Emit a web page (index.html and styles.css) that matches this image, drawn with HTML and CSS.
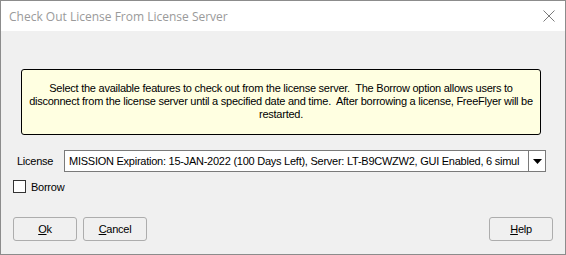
FILE: index.html
```html
<!DOCTYPE html>
<html>
<head>
<meta charset="utf-8">
<link rel="stylesheet" href="styles.css">
</head>
<body>
<div class="window">
  <div class="titlebar">
    <span class="title">Check Out License From License Server</span>
    <svg class="close" width="12" height="12" viewBox="0 0 12 12"><path d="M0.5 0.5 L11.5 11.5 M11.5 0.5 L0.5 11.5" stroke="#7a7a7a" stroke-width="1" fill="none"/></svg>
  </div>
  <div class="content">
    <div class="tip">Select the available features to check out from the license server.&nbsp; The Borrow option allows users to disconnect from the license server until a specified date and time.&nbsp; After borrowing a license, FreeFlyer will be restarted.</div>
    <div class="license-row">
      <span class="label">License</span>
      <div class="combo">
        <span class="combo-text">MISSION Expiration: 15-JAN-2022 (100 Days Left), Server: LT-B9CWZW2, GUI Enabled, 6 simul</span>
        <span class="combo-btn"><svg width="9" height="5" viewBox="0 0 9 5"><path d="M0 0 H9 L4.5 5 Z" fill="#000"/></svg></span>
      </div>
    </div>
    <div class="borrow-row">
      <span class="check"></span>
      <span>Borrow</span>
    </div>
    <div class="buttons">
      <button class="btn"><u>O</u>k</button>
      <button class="btn"><u>C</u>ancel</button>
      <span class="spacer"></span>
      <button class="btn"><u>H</u>elp</button>
    </div>
  </div>
</div>
</body>
</html>
```
FILE: styles.css
```css
* { box-sizing: border-box; }
html, body { margin: 0; padding: 0; background: #f0f0f0; }
body { font-family: "Liberation Sans", Arial, sans-serif; font-size: 11px; color: #000; letter-spacing: -0.25px; }
.window {
  width: 566px; height: 255px;
  border: 1px solid #8c8c8c;
  background: #f0f0f0;
  display: flex; flex-direction: column;
}
.titlebar {
  height: 30px; background: #fff;
  display: flex; align-items: center;
  padding: 0 10px 0 8px;
}
.title {
  font-family: "Open Sans", "Noto Sans", sans-serif;
  font-size: 12px; color: #9a9a9a;
  letter-spacing: 0;
  flex: 1;
}
.close { display: block; }
.content {
  flex: 1;
  padding: 38px 0 0 0;
  display: flex; flex-direction: column;
}
.tip {
  margin-left: 20px; width: 520px; height: 66px;
  background: #ffffe1;
  border: 1px solid #000;
  border-radius: 3px;
  text-align: center;
  line-height: 13px;
  padding: 12px 1px 0 1px;
}
.license-row {
  display: flex; align-items: center;
  margin-top: 15px;
  padding-left: 16px;
}
.label { width: 47px; }
.combo {
  width: 482px; height: 22px;
  background: #fff;
  border: 1px solid #7a7a7a;
  display: flex; align-items: center;
}
.combo-text { flex: 1; padding-left: 4px; white-space: nowrap; overflow: hidden; }
.combo-btn {
  width: 17px; height: 20px;
  border-left: 1px solid #7a7a7a;
  background: #fff;
  display: flex; align-items: center; justify-content: center;
}
.borrow-row {
  display: flex; align-items: center;
  margin-top: 8px; padding-left: 12px;
}
.check {
  width: 13px; height: 13px;
  border: 1px solid #333;
  background: #fff;
  margin-right: 5px;
}
.buttons {
  display: flex; align-items: center;
  margin-top: 24px;
  padding: 0 12px 0 12px;
}
.btn {
  font-family: "Liberation Sans", Arial, sans-serif;
  font-size: 11px; color: #000;
  letter-spacing: -0.25px;
  width: 64px; height: 24px;
  background: #f0f0f0;
  border: 1px solid #adadad;
  border-radius: 3px;
  padding: 0;
  margin-right: 6px;
}
.btn:last-child { margin-right: 0; }
.spacer { flex: 1; }
```
